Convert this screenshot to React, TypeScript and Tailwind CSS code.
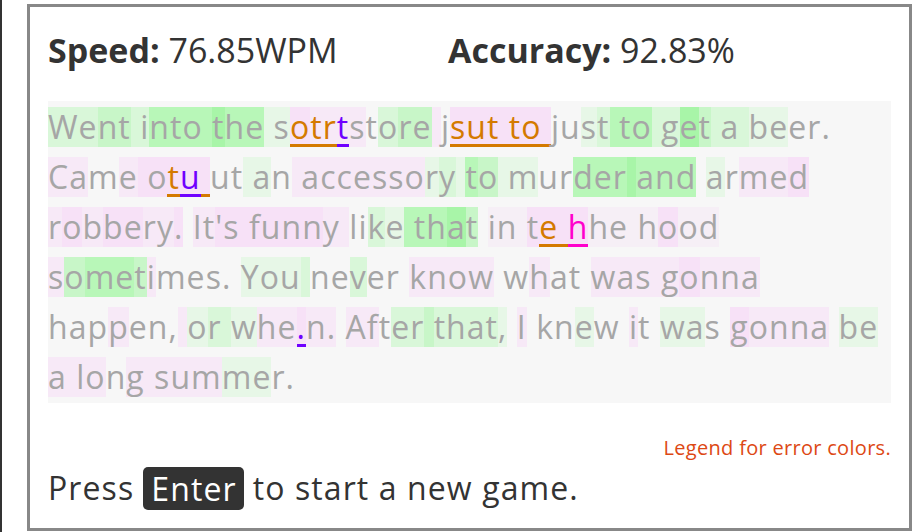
import React from "react";

type Seg = [string, string, string?];

const BG: Record<string, string> = {
  "": "",
  a: "bg-[#e7f7e7]",
  b: "bg-[#d9f7d9]",
  c: "bg-[#c8f6c8]",
  d: "bg-[#b8f7b8]",
  e: "bg-[#a8f5a8]",
  p: "bg-[#f6eff6]",
  q: "bg-[#f7e9f7]",
  r: "bg-[#f7e1f7]",
};

const ERR: Record<string, string> = {
  O: "text-[#d47a00] border-b-[3px] border-[#d47a00]",
  P: "text-[#7000ff] border-b-[3px] border-[#7000ff]",
  M: "text-[#ff00cc] border-b-[3px] border-[#ff00cc]",
};

const LINES: Seg[][] = [
  [
    ["We", "b"], ["nt", "c"], [" i", "b"], ["nto", "d"], [" ", "d"], ["t", "e"], ["he", "d"],
    [" s", "a"], ["o", "r", "O"], ["tr", "q", "O"], ["t", "q", "P"], ["s", "q"], ["t", ""],
    ["o", "b"], ["re", "c"], [" ", "q"], ["j", ""], ["sut to ", "r", "O"], ["ju", ""], ["s", "a"],
    ["t", "b"], [" to", "d"], [" ", "b"], ["g", "b"], ["e", "e"], ["t", "c"], [" a ", "b"],
    ["be", "a"], ["er.", ""],
  ],
  [
    ["Ca", "q"], ["m", ""], ["e", "q"], [" o", "r"], ["t", "r", "O"], ["u", "r", "P"], [" ", "r", "O"],
    ["ut", ""], [" a", "a"], ["n", ""], [" accesso", "q"], ["r", "a"], ["y", "b"], [" ", "a"],
    ["t", "d"], ["o", "c"], [" m", "a"], ["ur", ""], ["der", "d"], [" ", "e"], ["and", "d"],
    [" ", ""], ["a", "a"], ["r", ""], ["me", "q"], ["d", "r"],
  ],
  [
    ["r", "q"], ["o", "r"], ["b", "q"], ["be", "r"], ["ry", "q"], [".", "r"], [" ", ""],
    ["It", "q"], ["'s funn", "r"], ["y ", "q"], ["li", ""], ["k", "b"], ["e", "a"], [" th", "d"],
    ["a", "e"], ["t", "c"], [" ", ""], ["in ", "p"], ["t", "r"], ["e ", "r", "O"], ["h", "r", "M"],
    ["he h", "p"], ["o", "r"], ["od", "p"],
  ],
  [
    ["s", "q"], ["o", "c"], ["me", "d"], ["t", "c"], ["i", "q"], ["mes. ", ""], ["You", "a"],
    [" ", "b"], ["ne", ""], ["v", "b"], ["er ", ""], ["know", "q"], [" w", ""], ["h", "q"],
    ["at ", ""], ["was g", "q"], ["o", "r"], ["nna", "q"],
  ],
  [
    ["hap", ""], ["p", "q"], ["en,", ""], [" ", "q"], ["o", "a"], ["r ", "b"], ["w", "a"],
    ["he", "q"], [".", "r", "P"], ["n.", "q"], [" ", ""], ["Af", "q"], ["t", ""], ["er", "b"],
    [" ", "c"], ["that", "b"], [",", "a"], [" ", ""], ["I", "q"], [" kn", ""], ["e", "a"],
    ["w ", ""], ["i", "q"], ["t ", ""], ["wa", "a"], ["s ", ""], ["g", "r"], ["onna", "q"],
    [" ", ""], ["be", "a"],
  ],
  [
    ["a lo", "q"], ["n", ""], ["g sum", "q"], ["me", "a"], ["r.", ""],
  ],
];

export default function App() {
  return (
    <div
      className="w-[916px] h-[532px] bg-white border-l-2 border-[#333] overflow-hidden"
      style={{ fontFamily: '"Open Sans", "Noto Sans", sans-serif' }}
    >
      <div className="ml-[25px] mt-[4px] w-[885px] h-[527px] border-[3px] border-[#888] px-[18px] flex flex-col">
        <div className="flex text-[34px] leading-[40px] text-[#333] pt-[23px] h-[94px]">
          <div className="w-[400px]">
            <span className="font-bold">Speed:</span> 76.85WPM
          </div>
          <div>
            <span className="font-bold">Accuracy:</span> 92.83%
          </div>
        </div>
        <div className="bg-[#f7f7f7] py-[1px] text-[32px] tracking-[1.05px] text-[#a6a6a6]">
          {LINES.map((line, i) => (
            <div key={i} className="h-[50px] flex items-center">
              {line.map(([t, bg, err], j) => (
                <span
                  key={j}
                  className={`inline-block h-[40px] leading-[40px] whitespace-pre ${BG[bg]} ${err ? ERR[err] : ""}`}
                >
                  {t}
                </span>
              ))}
            </div>
          ))}
        </div>
        <div className="text-right text-[20px] leading-[28px] tracking-[0.3px] text-[#dd4814] mt-[31px]">
          Legend for error colors.
        </div>
        <div className="text-[32px] leading-[44px] tracking-[1.1px] text-[#333] mt-[4px] flex items-center">
          <span>Press</span>
          <span className="bg-[#333] text-white rounded-[5px] pl-[8px] pr-[7px] ml-[9px] mr-[9px] h-[43px] leading-[43px]">Enter</span>
          <span>to start a new game.</span>
        </div>
      </div>
    </div>
  );
}
